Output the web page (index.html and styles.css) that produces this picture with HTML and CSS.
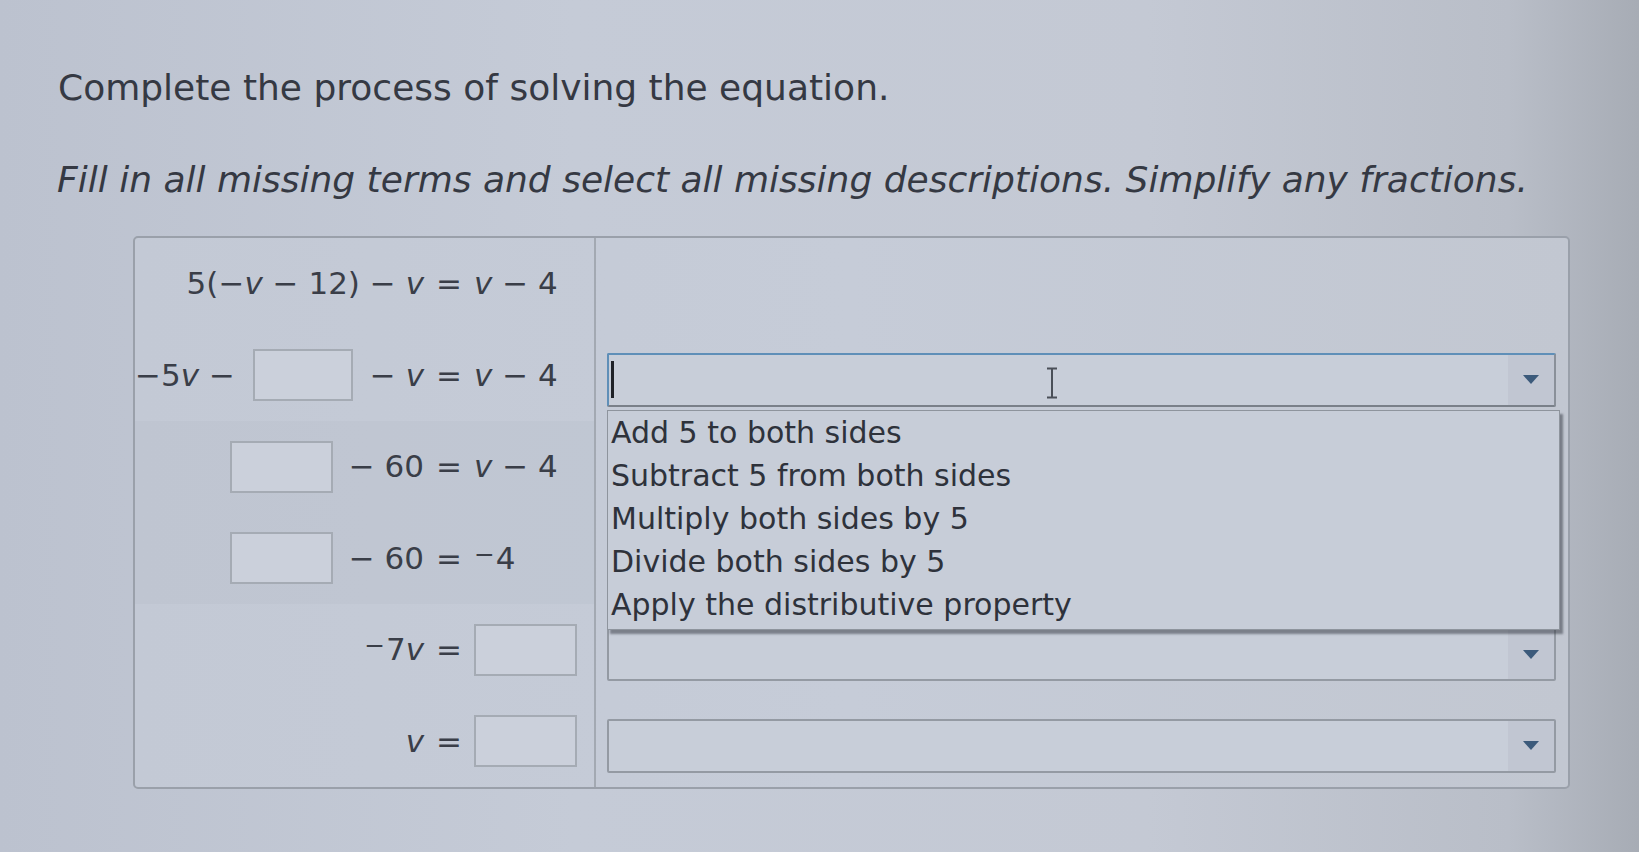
FILE: index.html
```html
<!DOCTYPE html>
<html lang="en">
<head>
<meta charset="utf-8">
<title>Complete the process of solving the equation</title>
<link rel="stylesheet" href="styles.css">
</head>
<body>
<main class="page">
  <h1 class="title">Complete the process of solving the equation.</h1>
  <p class="instr">Fill in all missing terms and select all missing descriptions. Simplify any fractions.</p>

  <section class="panel">
    <div class="steps">
      <div class="eq">
        <span class="lhs">5(−<i>v</i> − 12) − <i>v</i></span>
        <span class="rel">=</span>
        <span class="rhs"><i>v</i> − 4</span>
      </div>
      <div class="eq">
        <span class="lhs">−5<i>v</i> −<span class="box"></span>− <i>v</i></span>
        <span class="rel">=</span>
        <span class="rhs"><i>v</i> − 4</span>
      </div>
      <div class="eq">
        <span class="lhs"><span class="box"></span>− 60</span>
        <span class="rel">=</span>
        <span class="rhs"><i>v</i> − 4</span>
      </div>
      <div class="eq">
        <span class="lhs"><span class="box"></span>− 60</span>
        <span class="rel">=</span>
        <span class="rhs"><span class="neg">−</span>4</span>
      </div>
      <div class="eq">
        <span class="lhs"><span class="neg">−</span>7<i>v</i></span>
        <span class="rel">=</span>
        <span class="rhs"><span class="box box-r"></span></span>
      </div>
      <div class="eq">
        <span class="lhs"><i>v</i></span>
        <span class="rel">=</span>
        <span class="rhs"><span class="box box-r"></span></span>
      </div>
    </div>

    <div class="reasons">
      <div class="reason"></div>
      <div class="reason">
        <div class="select focused">
          <span class="caret"></span>
          <span class="arrow-zone"><span class="tri"></span></span>
          <svg class="ibeam" width="14" height="32" viewBox="0 0 14 32" aria-hidden="true">
            <path d="M2 1.5 H12 M7 1.5 V30.5 M2 30.5 H12" fill="none" stroke="#4a4f58" stroke-width="2"/>
          </svg>
          <ul class="menu">
            <li>Add 5 to both sides</li>
            <li>Subtract 5 from both sides</li>
            <li>Multiply both sides by 5</li>
            <li>Divide both sides by 5</li>
            <li>Apply the distributive property</li>
          </ul>
        </div>
      </div>
      <div class="reason"></div>
      <div class="reason"></div>
      <div class="reason">
        <div class="select">
          <span class="arrow-zone"><span class="tri"></span></span>
        </div>
      </div>
      <div class="reason">
        <div class="select">
          <span class="arrow-zone"><span class="tri"></span></span>
        </div>
      </div>
    </div>
  </section>
</main>
</body>
</html>
```

FILE: styles.css
```css
html, body {
  margin: 0;
  padding: 0;
}

body {
  width: 1639px;
  height: 852px;
  overflow: hidden;
  background: linear-gradient(90deg, #bcc2cf 0%, #c5cbd7 35%, #c4c9d4 70%, #b9bec8 92%, #a7acb5 100%);
  color: #363a44;
  font-family: "DejaVu Sans", Verdana, sans-serif;
}

.page {
  padding-top: 66px;
}

.title {
  margin: 0 0 0 58px;
  font-size: 36px;
  line-height: 44px;
  font-weight: normal;
  color: #353943;
}

.instr {
  margin: 48px 0 0 57px;
  font-size: 36px;
  line-height: 44px;
  font-style: italic;
  color: #353943;
}

.panel {
  margin: 34px 0 0 133px;
  width: 1437px;
  height: 553px;
  box-sizing: border-box;
  border: 2px solid #9aa0aa;
  border-radius: 5px;
  display: grid;
  grid-template-columns: 461px 1fr;
  background: linear-gradient(90deg, #c3c9d5 0%, #c6ccd8 50%, #c2c7d1 100%);
}

.steps {
  border-right: 2px solid #a3a9b2;
  display: grid;
  grid-template-rows: repeat(6, 1fr);
}

.eq {
  display: grid;
  grid-template-columns: 289px 50px 1fr;
  align-items: center;
  font-size: 31px;
  line-height: 1;
  color: #3a3e48;
}

.eq:nth-child(3), .eq:nth-child(4) {
  background: rgba(120, 128, 140, 0.05);
}

.lhs {
  display: flex;
  justify-content: flex-end;
  align-items: center;
  white-space: pre;
}

.rel {
  text-align: center;
}

.rhs {
  display: flex;
  align-items: center;
  white-space: pre;
}

.eq i {
  font-style: italic;
}

.neg {
  font-size: 0.8em;
  position: relative;
  top: -0.12em;
  margin-right: 1px;
}

.box {
  display: inline-block;
  width: 103px;
  height: 52px;
  box-sizing: border-box;
  border: 2px solid #a5abb4;
  background: #cbd0db;
  margin: 0 16px;
}

.eq:nth-child(2) .box {
  margin: 0 17px 0 18px;
}

.box-r {
  margin: 0;
}

.reasons {
  display: grid;
  grid-template-rows: repeat(6, 1fr);
  padding: 0 12px 0 11px;
}

.reason {
  display: flex;
  align-items: center;
}

.select {
  position: relative;
  width: 100%;
  height: 54px;
  margin-top: 9px;
  box-sizing: border-box;
  border: 2px solid #949aa3;
  border-radius: 2px;
  background: #c8ced9;
  display: flex;
  align-items: center;
  justify-content: flex-end;
}

.select.focused {
  border-color: #5f8fb8 #8a9099 #7a8089 #5f8fb8;
  justify-content: space-between;
}

.caret {
  width: 3px;
  height: 37px;
  margin-left: 2px;
  background: #1f2228;
}

.arrow-zone {
  align-self: stretch;
  width: 46px;
  display: flex;
  align-items: center;
  justify-content: center;
  background: rgba(110, 118, 130, 0.08);
}

.tri {
  width: 0;
  height: 0;
  border-left: 8px solid transparent;
  border-right: 8px solid transparent;
  border-top: 9px solid #3c5a7b;
}

.ibeam {
  position: absolute;
  left: 436px;
  top: 12px;
}

.menu {
  position: absolute;
  left: -2px;
  top: calc(100% + 5px);
  width: calc(100% + 8px);
  margin: 0;
  padding: 0 0 3px 0;
  list-style: none;
  box-sizing: border-box;
  background: #c7cdd8;
  border: 1px solid #8e949d;
  box-shadow: 3px 4px 2px rgba(45, 50, 60, 0.5);
  z-index: 2;
}

.menu li {
  font-size: 30px;
  line-height: 43px;
  padding-left: 3px;
  color: #2e323b;
  white-space: nowrap;
}
```
